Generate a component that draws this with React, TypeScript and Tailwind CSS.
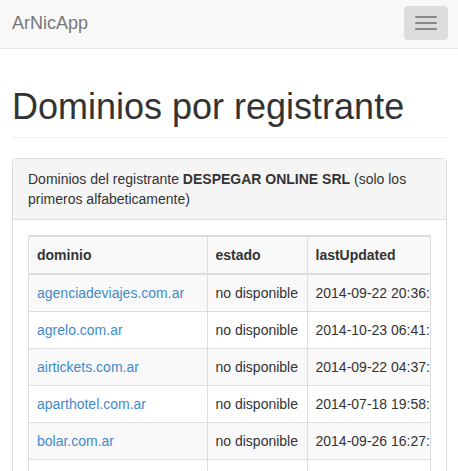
import React from 'react';

const rows = [
  { dominio: 'agenciadeviajes.com.ar', estado: 'no disponible', lastUpdated: '2014-09-22 20:36:14' },
  { dominio: 'agrelo.com.ar', estado: 'no disponible', lastUpdated: '2014-10-23 06:41:52' },
  { dominio: 'airtickets.com.ar', estado: 'no disponible', lastUpdated: '2014-09-22 04:37:09' },
  { dominio: 'aparthotel.com.ar', estado: 'no disponible', lastUpdated: '2014-07-18 19:58:33' },
  { dominio: 'bolar.com.ar', estado: 'no disponible', lastUpdated: '2014-09-26 16:27:45' },
  { dominio: 'buscadordevuelos.com.ar', estado: 'no disponible', lastUpdated: '2014-09-22 11:02:17' },
];

export default function App() {
  return (
    <div className="min-h-screen bg-white text-[14px] leading-[20px] text-[#333]" style={{ fontFamily: '"Liberation Sans", Arial, sans-serif' }}>
      {/* Navbar */}
      <nav className="h-[49px] bg-[#f8f8f8] border-b border-[#e7e7e7] flex items-start justify-between pl-[12px] pr-[10px]">
        <a href="#" className="text-[18px] leading-[20px] text-[#777] mt-[13px]">ArNicApp</a>
        <button className="mt-[6px] w-[44px] h-[34px] rounded-[4px] bg-[#ddd] flex flex-col items-center justify-center gap-[4px]" aria-label="Toggle navigation">
          <span className="block w-[22px] h-[2px] bg-[#888] rounded-[1px]" />
          <span className="block w-[22px] h-[2px] bg-[#888] rounded-[1px]" />
          <span className="block w-[22px] h-[2px] bg-[#888] rounded-[1px]" />
        </button>
      </nav>

      <div className="pl-[12px] pr-[11px]">
        {/* Page header */}
        <div className="mt-[38px] pb-[10px] border-b border-[#eee]">
          <h1 className="text-[36px] leading-[40px] font-normal text-[#333]">Dominios por registrante</h1>
        </div>

        {/* Panel */}
        <div className="mt-[20px] border border-[#ddd] rounded-[4px]">
          <div className="bg-[#f5f5f5] border-b border-[#ddd] px-[15px] py-[10px] rounded-t-[3px]">
            Dominios del registrante <b>DESPEGAR ONLINE SRL</b> (solo los primeros alfabeticamente)
          </div>
          <div className="p-[15px]">
            <div className="border border-[#ddd] overflow-hidden">
              <table className="border-collapse whitespace-nowrap" style={{ width: 560 }}>
                <thead>
                  <tr className="bg-[#f9f9f9]">
                    <th className="w-[178px] text-left font-bold p-[8px] border-t border-r border-b-2 border-[#ddd]">dominio</th>
                    <th className="w-[100px] text-left font-bold p-[8px] border-t border-r border-b-2 border-[#ddd]">estado</th>
                    <th className="text-left font-bold p-[8px] border-t border-r border-b-2 border-[#ddd]">lastUpdated</th>
                  </tr>
                </thead>
                <tbody>
                  {rows.map((r, i) => (
                    <tr key={r.dominio} className={i % 2 === 0 ? 'bg-[#f9f9f9]' : 'bg-white'}>
                      <td className="p-[8px] border-t border-r border-[#ddd]">
                        <a href="#" className="text-[#428bca]">{r.dominio}</a>
                      </td>
                      <td className="p-[8px] border-t border-r border-[#ddd]">{r.estado}</td>
                      <td className="p-[8px] border-t border-r border-[#ddd]">{r.lastUpdated}</td>
                    </tr>
                  ))}
                </tbody>
              </table>
            </div>
          </div>
        </div>
      </div>
    </div>
  );
}
